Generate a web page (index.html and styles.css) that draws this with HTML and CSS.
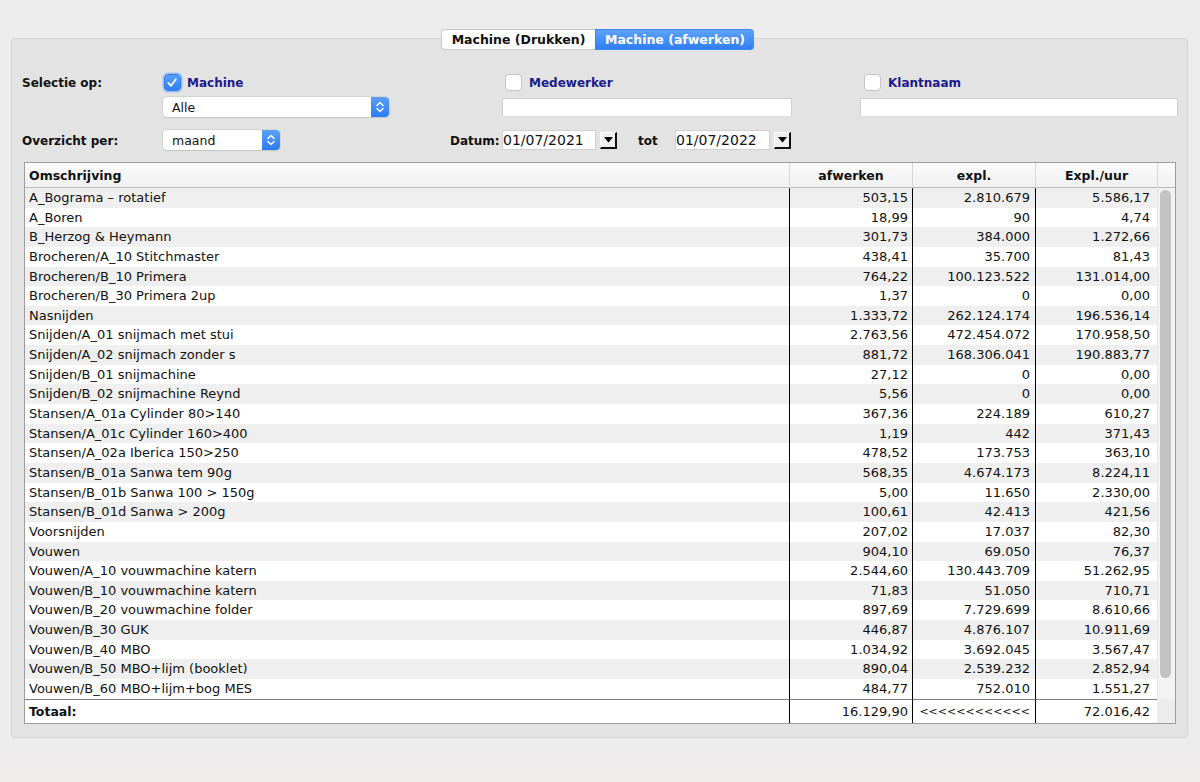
FILE: index.html
```html
<!DOCTYPE html>
<html lang="nl">
<head>
<meta charset="utf-8">
<title>Machine (afwerken)</title>
<link rel="stylesheet" href="styles.css">
</head>
<body>
<div class="tabs">
  <div class="tab">Machine (Drukken)</div>
  <div class="tab active">Machine (afwerken)</div>
</div>
<div class="panel">
  <div class="frow r1">
    <div class="lbl">Selectie op:</div>
    <div class="grp g1">
      <span class="cb checked"><svg width="17" height="17" viewBox="0 0 17 17"><path d="M4.5 9 L7.5 12 L12.5 5" fill="none" stroke="#fff" stroke-width="1.8" stroke-linecap="round" stroke-linejoin="round"/></svg></span>
      <span class="cblbl">Machine</span>
    </div>
    <div class="grp g2">
      <span class="cb"></span>
      <span class="cblbl">Medewerker</span>
    </div>
    <div class="grp g3">
      <span class="cb"></span>
      <span class="cblbl">Klantnaam</span>
    </div>
  </div>
  <div class="frow r2">
    <div class="select s-alle"><span class="sval">Alle</span><span class="stepper"><svg width="18" height="20" viewBox="0 0 18 20"><path d="M6 8.5 L9 5.5 L12 8.5 M6 11.5 L9 14.5 L12 11.5" fill="none" stroke="#fff" stroke-width="1.5" stroke-linecap="round" stroke-linejoin="round"/></svg></span></div>
    <div class="field f-med"></div>
    <div class="field f-klant"></div>
  </div>
  <div class="frow r3">
    <div class="lbl">Overzicht per:</div>
    <div class="select s-maand"><span class="sval">maand</span><span class="stepper"><svg width="18" height="20" viewBox="0 0 18 20"><path d="M6 8.5 L9 5.5 L12 8.5 M6 11.5 L9 14.5 L12 11.5" fill="none" stroke="#fff" stroke-width="1.5" stroke-linecap="round" stroke-linejoin="round"/></svg></span></div>
    <div class="lbl datum">Datum:</div>
    <div class="date d1">01/07/2021</div>
    <div class="dbtn"><svg width="9" height="6" viewBox="0 0 9 6"><path d="M0 0 H9 L4.5 5.5 Z" fill="#000"/></svg></div>
    <div class="lbl tot">tot</div>
    <div class="date d2">01/07/2022</div>
    <div class="dbtn"><svg width="9" height="6" viewBox="0 0 9 6"><path d="M0 0 H9 L4.5 5.5 Z" fill="#000"/></svg></div>
  </div>

  <div class="table">
    <div class="thead">
      <div class="h1">Omschrijving</div>
      <div>afwerken</div>
      <div>expl.</div>
      <div>Expl./uur</div>
      <div></div>
    </div>
    <div class="tbody">
      <div class="rows">
        <div class="row"><div>A_Bograma – rotatief</div><div>503,15</div><div>2.810.679</div><div>5.586,17</div></div>
        <div class="row"><div>A_Boren</div><div>18,99</div><div>90</div><div>4,74</div></div>
        <div class="row"><div>B_Herzog &amp; Heymann</div><div>301,73</div><div>384.000</div><div>1.272,66</div></div>
        <div class="row"><div>Brocheren/A_10 Stitchmaster</div><div>438,41</div><div>35.700</div><div>81,43</div></div>
        <div class="row"><div>Brocheren/B_10 Primera</div><div>764,22</div><div>100.123.522</div><div>131.014,00</div></div>
        <div class="row"><div>Brocheren/B_30 Primera 2up</div><div>1,37</div><div>0</div><div>0,00</div></div>
        <div class="row"><div>Nasnijden</div><div>1.333,72</div><div>262.124.174</div><div>196.536,14</div></div>
        <div class="row"><div>Snijden/A_01 snijmach met stui</div><div>2.763,56</div><div>472.454.072</div><div>170.958,50</div></div>
        <div class="row"><div>Snijden/A_02 snijmach zonder s</div><div>881,72</div><div>168.306.041</div><div>190.883,77</div></div>
        <div class="row"><div>Snijden/B_01 snijmachine</div><div>27,12</div><div>0</div><div>0,00</div></div>
        <div class="row"><div>Snijden/B_02 snijmachine Reynd</div><div>5,56</div><div>0</div><div>0,00</div></div>
        <div class="row"><div>Stansen/A_01a Cylinder 80&gt;140</div><div>367,36</div><div>224.189</div><div>610,27</div></div>
        <div class="row"><div>Stansen/A_01c Cylinder 160&gt;400</div><div>1,19</div><div>442</div><div>371,43</div></div>
        <div class="row"><div>Stansen/A_02a Iberica 150&gt;250</div><div>478,52</div><div>173.753</div><div>363,10</div></div>
        <div class="row"><div>Stansen/B_01a Sanwa tem 90g</div><div>568,35</div><div>4.674.173</div><div>8.224,11</div></div>
        <div class="row"><div>Stansen/B_01b Sanwa 100 &gt; 150g</div><div>5,00</div><div>11.650</div><div>2.330,00</div></div>
        <div class="row"><div>Stansen/B_01d Sanwa &gt; 200g</div><div>100,61</div><div>42.413</div><div>421,56</div></div>
        <div class="row"><div>Voorsnijden</div><div>207,02</div><div>17.037</div><div>82,30</div></div>
        <div class="row"><div>Vouwen</div><div>904,10</div><div>69.050</div><div>76,37</div></div>
        <div class="row"><div>Vouwen/A_10 vouwmachine katern</div><div>2.544,60</div><div>130.443.709</div><div>51.262,95</div></div>
        <div class="row"><div>Vouwen/B_10 vouwmachine katern</div><div>71,83</div><div>51.050</div><div>710,71</div></div>
        <div class="row"><div>Vouwen/B_20 vouwmachine folder</div><div>897,69</div><div>7.729.699</div><div>8.610,66</div></div>
        <div class="row"><div>Vouwen/B_30 GUK</div><div>446,87</div><div>4.876.107</div><div>10.911,69</div></div>
        <div class="row"><div>Vouwen/B_40 MBO</div><div>1.034,92</div><div>3.692.045</div><div>3.567,47</div></div>
        <div class="row"><div>Vouwen/B_50 MBO+lijm (booklet)</div><div>890,04</div><div>2.539.232</div><div>2.852,94</div></div>
        <div class="row"><div>Vouwen/B_60 MBO+lijm+bog MES</div><div>484,77</div><div>752.010</div><div>1.551,27</div></div>
      </div>
      <div class="scroll"><div class="thumb"></div></div>
    </div>
    <div class="tfoot">
      <div class="tl">Totaal:</div>
      <div>16.129,90</div>
      <div class="arrows">&lt;&lt;&lt;&lt;&lt;&lt;&lt;&lt;&lt;&lt;&lt;&lt;</div>
      <div>72.016,42</div>
      <div class="fs"></div>
    </div>
  </div>
</div>
</body>
</html>
```

FILE: styles.css
```css
* { box-sizing: border-box; }
html, body { margin: 0; height: 782px; }
body {
  background: linear-gradient(#ececec 0, #ececec 720px, #f0eded 782px);
  font-family: "DejaVu Sans", "Liberation Sans", sans-serif;
  font-size: 12px;
  color: #111;
  overflow: hidden;
}

/* tabs */
.tabs {
  display: flex;
  padding-left: 441px;
  margin-top: 29px;
  height: 21px;
  position: relative;
  z-index: 1;
}
.tab {
  height: 21px;
  width: 154px;
  line-height: 19px;
  text-align: center;
  font-weight: bold;
  font-size: 12.5px;
  background: #fff;
  border: 1px solid #cacaca;
  border-right: none;
  border-radius: 4px 0 0 4px;
  color: #111;
}
.tab.active {
  width: 159px;
  color: #fff;
  background: linear-gradient(#5da2fb, #2f7ef4);
  border-color: #3a85f4;
  border-radius: 0 4px 4px 0;
}

/* panel */
.panel {
  margin: -12px 0 0 11px;
  width: 1177px;
  height: 700px;
  border: 1px solid #d5d5d5;
  border-radius: 4px;
  background: #e3e3e3;
  padding: 33px 0 0 10px;
}

.frow { display: flex; align-items: center; height: 20px; }
.r2 { margin-top: 5px; }
.r3 { margin-top: 13px; }

.lbl { font-weight: bold; width: 140px; flex: none; white-space: nowrap; padding-top: 2px; }

.grp { display: flex; align-items: center; flex: none; }
.g1 { width: 339px; }
.g2 { width: 358px; padding-left: 4px; }
.g3 { padding-left: 5px; }

.cb {
  width: 17px; height: 17px;
  border-radius: 4px;
  background: #fff;
  border: 1px solid #c3c3c3;
  flex: none;
  display: flex;
  margin-top: 1px;
}
.cb.checked {
  margin-left: 2px;
  background: linear-gradient(#5aa0fb, #2f7ef4);
  border-color: #2f7ef4;
  box-shadow: 0 0 0 1.5px rgba(110, 160, 240, 0.55);
}
.cb.checked svg { margin: -1px 0 0 -1px; }
.cblbl { color: #1b1a8c; font-weight: bold; margin-left: 7px; padding-top: 2px; }
.g1 .cblbl { margin-left: 6px; }

/* selects */
.select {
  display: flex;
  height: 20px;
  background: #fff;
  border-radius: 4px;
  box-shadow: 0 0 0 0.5px #c4c4c4, 0 1px 1px rgba(0,0,0,0.12);
  flex: none;
}
.s-alle { width: 226px; margin-left: 1px; }
.s-maand { width: 117px; margin-left: 1px; }
.r2 .s-alle { margin-left: 141px; }
.sval { flex: 1; padding-left: 9px; line-height: 21px; font-size: 12.5px; }
.stepper {
  width: 18px; height: 20px;
  background: linear-gradient(#5ba1fb, #2c7bf3);
  border-radius: 0 4px 4px 0;
  display: flex;
}

.field {
  height: 19px;
  background: #fff;
  border: 1px solid #d0d0d0;
  border-bottom-color: #e0e0e0;
  flex: none;
}
.f-med { width: 290px; margin-left: 113px; }
.f-klant { width: 318px; margin-left: 68px; }

.datum { width: 52px; margin-left: 170px; }
.date {
  height: 20px;
  background: #fff;
  border: 1px solid #d0d0d0;
  font-size: 14px;
  line-height: 19px;
  padding-left: 0;
  flex: none;
}
.d1 { width: 94px; }
.d2 { width: 95px; }
.dbtn {
  width: 17px; height: 17px;
  margin-left: 4px;
  background: #efefef;
  border-top: 1px solid #fff;
  border-left: 1px solid #fff;
  border-right: 2px solid #111;
  border-bottom: 2px solid #111;
  display: flex;
  align-items: center;
  justify-content: center;
  flex: none;
}
.tot { width: 37px; margin-left: 21px; }

/* table */
.table {
  margin: 12px 0 0 2px;
  width: 1152px;
  border: 1px solid #9c9c9c;
  background: #fff;
}
.thead {
  display: grid;
  grid-template-columns: 764px 123px 123px 122px 18px;
  height: 25px;
  border-bottom: 1px solid #b9b9b9;
  background: linear-gradient(#fbfbfb, #f1f1f1);
  font-weight: bold;
  font-size: 12.5px;
}
.thead > div {
  border-left: 1px solid #d8d8d8;
  text-align: center;
  line-height: 25px;
}
.thead > .h1 { border-left: none; text-align: left; padding-left: 4px; }

.tbody { display: flex; height: 511px; }
.rows { width: 1132px; }
.row {
  display: grid;
  grid-template-columns: 764px 123px 123px 122px;
  height: 19.65px;
  font-size: 13px;
}
.row > div { line-height: 18.65px; padding-top: 1px; }
.row:nth-child(odd) { background: #efefef; }
.row > div, .tfoot > div { white-space: nowrap; overflow: hidden; }
.row > div:first-child { padding-left: 4px; }
.row > div:nth-child(n+2), .tfoot > div:nth-child(n+2) { text-align: right; }
.row > div:nth-child(2), .tfoot > div:nth-child(2) { border-left: 1px solid #000; padding-right: 4px; }
.row > div:nth-child(3), .tfoot > div:nth-child(3) { border-left: 1px solid #000; padding-right: 5px; }
.row > div:nth-child(4), .tfoot > div:nth-child(4) { border-left: 1px solid #000; padding-right: 7px; }

.scroll {
  width: 18px;
  background: #f3f3f3;
  border-left: 1px solid #e6e6e6;
  padding: 2px 0 0 2px;
}
.thumb {
  width: 11px;
  height: 488px;
  border-radius: 6px;
  background: #c2c2c2;
}

.tfoot {
  display: grid;
  grid-template-columns: 764px 123px 123px 122px 18px;
  height: 24px;
  font-size: 13px;
}
.tfoot > div { border-top: 1px solid #7d7d7d; line-height: 23px; }
.tfoot > .tl { font-weight: bold; padding-left: 4px; font-size: 12.5px; }
.tfoot > .arrows { font-size: 11px; }
.tfoot > .fs { border-top: none; background: #ececec; }
```
